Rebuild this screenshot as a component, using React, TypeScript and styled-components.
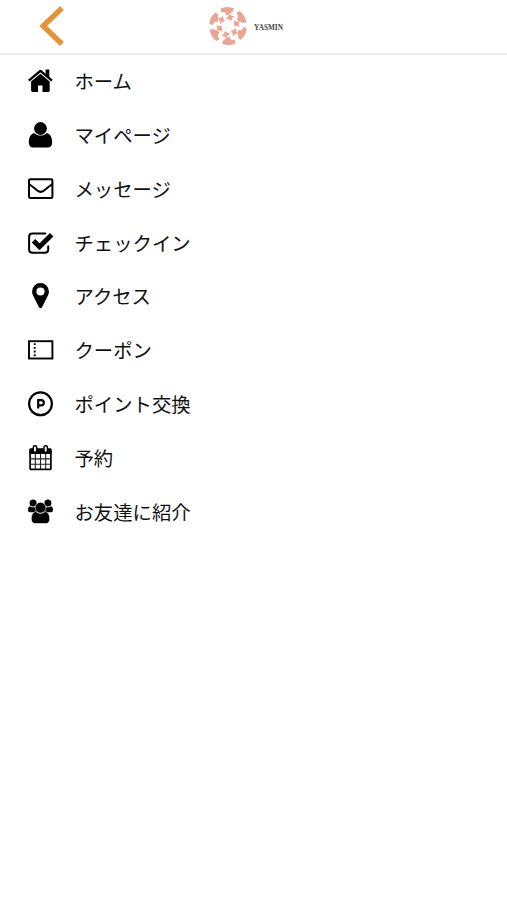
import React from 'react';
import styled, { createGlobalStyle } from 'styled-components';

const GlobalStyle = createGlobalStyle`
  * { box-sizing: border-box; }
  body { margin: 0; background: #fff; }
`;

const Screen = styled.main`
  min-height: 900px;
  background: #fff;
  color: #111;
  font-family: 'Noto Sans CJK JP', sans-serif;
`;

const Header = styled.header`
  display: grid;
  grid-template-columns: 104px 1fr 120px;
  align-items: center;
  height: 55px;
  padding-bottom: 1px;
  border-bottom: 2px solid #ededed;
`;

const BackButton = styled.button`
  display: flex;
  padding: 0 0 0 39px;
  border: 0;
  background: none;
`;

const Brand = styled.div`
  display: flex;
  align-items: center;
  justify-content: center;
  gap: 6px;
`;

const BrandName = styled.span`
  padding-top: 4px;
  font: 700 7.3px/10px 'Liberation Serif', serif;
  color: #444;
`;

const Menu = styled.nav`
  display: grid;
  grid-auto-rows: 53.8px;
  margin-top: -0.6px;
`;

const MenuItem = styled.a`
  display: flex;
  align-items: center;
  gap: 21.5px;
  padding-left: 27px;
  color: inherit;
  text-decoration: none;
`;

const Icon = styled.svg`
  flex: none;
  width: 26px;
  height: 26px;
  overflow: visible;
`;

const Label = styled.span`
  font-size: 19.35px;
  line-height: 28px;
  white-space: nowrap;
`;

const HomeIcon = () => (
  <Icon viewBox="0 0 26 26">
    <path d="M1.800 12.600 13.400 2.900 25 12.600" fill="none" stroke="#000" strokeWidth="2.400" strokeLinejoin="round" />
    <path d="M18.600 1.500h3.700v9l-3.700-3.500z" />
    <path d="M13.400 5.700 22.700 13.500v9.100q0 1.300-1.300 1.300h-5.900v-6.300h-4.500v6.300H5.400q-1.300 0-1.300-1.300v-9.100z" />
  </Icon>
);

const UserIcon = () => (
  <Icon viewBox="0 0 26 26">
    <circle cx="13.500" cy="6.500" r="6.400" />
    <path d="M7.300 10.900c3.600 3.600 8.800 3.600 12.400 0 3.900.9 5.500 4.800 5.500 9.500 0 3-1.700 5.100-4.400 5.100H6.200c-2.700 0-4.400-2.100-4.400-5.100 0-4.700 1.600-8.600 5.500-9.500z" />
  </Icon>
);

const MailIcon = () => (
  <Icon viewBox="0 0 26 26" fill="none" stroke="#000" strokeWidth="2" strokeLinejoin="round">
    <rect x="2" y="3.300" width="23.400" height="18.700" rx="1.300" />
    <path d="M2 8c3 2.200 5.700 4.300 8.300 6.500 2.600 2.100 4.200 2.100 6.800 0 2.600-2.200 5.300-4.300 8.300-6.500" />
  </Icon>
);

const CheckIcon = () => (
  <Icon viewBox="0 0 26 26" fill="none" stroke="#000">
    <path d="M18.300 3.500H5.500Q2.100 3.500 2.100 6.900v12.500q0 3.400 3.400 3.400h12.300q3.400 0 3.400-3.400v-3.200" strokeWidth="2" strokeLinecap="round" />
    <path d="m6.500 10.700 6 6L24.700 4.700" strokeWidth="4.900" />
  </Icon>
);

const PinIcon = () => (
  <Icon viewBox="0 0 26 26">
    <path fillRule="evenodd" d="M13.500 0a8.400 8.400 0 0 0-8.400 8.400c0 1.500.3 2.700.8 3.800l6.100 12q1.500 2 3 0l6.100-12c.5-1.100.8-2.300.8-3.800A8.400 8.400 0 0 0 13.500 0zm0 4.400a4.100 4.100 0 1 1 0 8.200 4.100 4.100 0 0 1 0-8.200z" />
  </Icon>
);

const CouponIcon = () => (
  <Icon viewBox="0 0 26 26" fill="none" stroke="#000">
    <rect x="2" y="4.200" width="23.400" height="17.300" strokeWidth="1.900" />
    <path d="M7.700 6.200v14" strokeWidth="1.900" strokeDasharray="1.900 1.800" />
  </Icon>
);

const PointIcon = () => (
  <Icon viewBox="0 0 26 26" fill="none" stroke="#000">
    <circle cx="13.500" cy="12.800" r="11.400" strokeWidth="2.200" />
    <path d="M11.200 17.600V9.200h3c3.500 0 3.500 5.200 0 5.200h-3" strokeWidth="2.200" />
  </Icon>
);

const CalendarIcon = () => (
  <Icon viewBox="0 0 26 26">
    <path d="M2.400 4.600q0-1.300 1.300-1.300h19.600q1.300 0 1.300 1.300V9H2.400z" />
    <rect x="3.100" y="5" width="20.800" height="19.400" rx="1" fill="none" stroke="#000" strokeWidth="1.700" />
    <path d="M8.300 9v15M13.500 9v15M18.700 9v15M3 13.900h20.500M3 19.200h20.500" stroke="#222" strokeWidth="1.100" />
    <rect x="6.300" y=".8" width="3.400" height="6.500" rx="1.600" fill="#fff" stroke="#000" strokeWidth="1.500" />
    <rect x="17" y=".8" width="3.400" height="6.500" rx="1.600" fill="#fff" stroke="#000" strokeWidth="1.500" />
  </Icon>
);

const GroupIcon = () => (
  <Icon viewBox="0 0 26 26">
    <circle cx="6.100" cy="3.900" r="3.500" />
    <circle cx="20.900" cy="3.900" r="3.500" />
    <path d="M3 7.200c2 1.500 4.300 1.500 6.300.3l1.200 5.800H3.200C1.700 13.300 1 12.300 1 11c0-2 .5-3.500 2-3.800zM24 7.200c-2 1.500-4.300 1.500-6.300.3l-1.200 5.800h7.300c1.500 0 2.200-1 2.200-2.300 0-2-.5-3.500-2-3.800z" />
    <g stroke="#fff" strokeWidth=".6">
      <path d="M9 12.600c2.800 2.200 6.200 2.200 9 0 3.300.5 4.700 3.500 4.700 7.500 0 2.900-1.500 4.500-4 4.500H8.300c-2.500 0-4-1.600-4-4.500 0-4 1.400-7 4.700-7.500z" />
      <circle cx="13.500" cy="8.700" r="5.400" />
    </g>
  </Icon>
);

const BrandMark = () => (
  <svg width="40" height="40" viewBox="-20 -20 40 40" fill="#eba594">
    {[0, 60, 120, 180, 240, 300].map((angle) => (
      <g key={angle} transform={`rotate(${angle})`}>
        <path d="M-7.200-17.500Q-1-20.600 6.200-17.500L4.500-14Q2.700-13.800 1.600-11.800L-1.400-10.600-2.800-13.400Q-4.800-14.300-7.200-13.800z" />
        <path d="m-2.200-7.800 2.600-2 1.200-2.200 2.200 1.800 2.800.7-2.500 1.700-1 2.700-2-1.500z" />
      </g>
    ))}
  </svg>
);

const items = [
  { label: 'ホーム', Glyph: HomeIcon },
  { label: 'マイページ', Glyph: UserIcon },
  { label: 'メッセージ', Glyph: MailIcon },
  { label: 'チェックイン', Glyph: CheckIcon },
  { label: 'アクセス', Glyph: PinIcon },
  { label: 'クーポン', Glyph: CouponIcon },
  { label: 'ポイント交換', Glyph: PointIcon },
  { label: '予約', Glyph: CalendarIcon },
  { label: 'お友達に紹介', Glyph: GroupIcon },
];

export default function App() {
  return (
    <Screen>
      <GlobalStyle />
      <Header>
        <BackButton aria-label="戻る">
          <svg width="26" height="42" viewBox="0 0 26 42" fill="none">
            <path d="M23 3 4.200 21 23 39" stroke="#e5933a" strokeWidth="5.400" />
          </svg>
        </BackButton>
        <Brand>
          <BrandMark />
          <BrandName>YASMIN</BrandName>
        </Brand>
      </Header>
      <Menu>
        {items.map(({ label, Glyph }) => (
          <MenuItem key={label} href="#">
            <Glyph />
            <Label>{label}</Label>
          </MenuItem>
        ))}
      </Menu>
    </Screen>
  );
}
